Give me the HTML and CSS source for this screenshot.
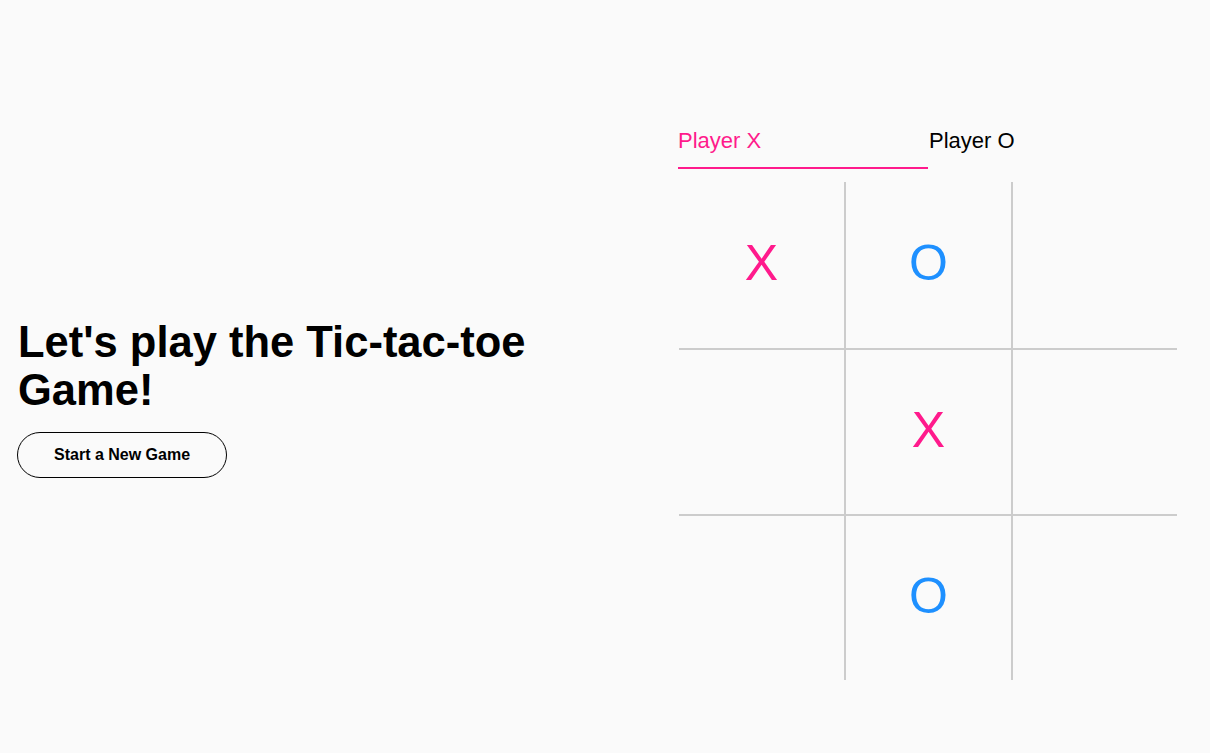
FILE: index.html
```html
<!DOCTYPE html>
<html lang="en">
<head>
    <meta charset="UTF-8">
    <meta name="viewport" content="width=device-width, initial-scale=1.0">
    <title>Tic-tac-toe</title>
    <link rel="stylesheet" href="styles.css">
</head>
<body>
    <main class="page">
        <section class="intro">
            <h1>Let's play the Tic-tac-toe Game!</h1>
            <button class="new-game">Start a New Game</button>
        </section>

        <section class="game">
            <div class="tabs">
                <div class="tab active">Player X</div>
                <div class="tab">Player O</div>
            </div>
            <div class="board">
                <div class="cell x">X</div>
                <div class="cell o">O</div>
                <div class="cell"></div>
                <div class="cell"></div>
                <div class="cell x">X</div>
                <div class="cell"></div>
                <div class="cell"></div>
                <div class="cell o">O</div>
                <div class="cell"></div>
            </div>
        </section>
    </main>
</body>
</html>
```

FILE: styles.css
```css
body {
    font-family: "Liberation Sans", Arial, sans-serif;
    margin: 0;
    background-color: #fafafa;
    color: #000;
}
.page {
    display: flex;
    align-items: center;
    min-height: 100vh;
    box-sizing: border-box;
    padding-top: 48px;
}
.intro {
    flex: 0 0 660px;
    box-sizing: border-box;
    padding-left: 17px;
    margin-bottom: 5px;
}
.intro h1 {
    font-size: 43.5px;
    line-height: 48px;
    margin: 0 0 18px 1px;
    max-width: 560px;
}
.new-game {
    font-family: inherit;
    font-size: 16px;
    font-weight: bold;
    color: #000;
    background: transparent;
    border: 1px solid #000;
    border-radius: 24px;
    padding: 13px 36px;
    cursor: pointer;
}
.game {
    margin-left: 18px;
    margin-top: 7px;
}
.tabs {
    display: flex;
    margin-bottom: 13px;
}
.tab {
    width: 250px;
    font-size: 22px;
    padding-bottom: 13.5px;
    border-bottom: 2px solid transparent;
}
.tab + .tab {
    padding-left: 1px;
}
.tab.active {
    color: #ff1a8c;
    border-bottom-color: #ff1a8c;
}
.board {
    display: grid;
    grid-template-columns: 167px 167px 164px;
    grid-template-rows: 168px 166px 164px;
    margin-left: 1px;
}
.cell {
    display: flex;
    align-items: center;
    justify-content: center;
    font-size: 50px;
    padding-bottom: 4px;
    box-sizing: border-box;
    border-right: 2px solid #ccc;
    border-bottom: 2px solid #ccc;
}
.cell:nth-child(3n) {
    border-right: none;
}
.cell:nth-child(n+7) {
    border-bottom: none;
}
.cell.x {
    color: #ff1a8c;
}
.cell.o {
    color: #1e90ff;
}
```
